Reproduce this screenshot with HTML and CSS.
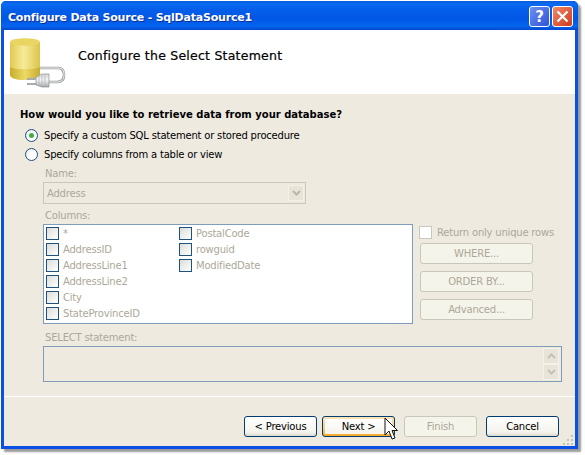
FILE: index.html
```html
<!DOCTYPE html>
<html lang="en">
<head>
  <meta charset="UTF-8" />
  <title>Configure Data Source</title>
  <link rel="stylesheet" href="styles.css">
</head>
<body>
  <div class="window">
    <div class="titlebar">
      <span class="title-text">Configure Data Source - SqlDataSource1</span>
      <div class="title-buttons">
        <span class="cap cap-help">?</span>
        <span class="cap cap-close">
          <svg width="13" height="13" viewBox="0 0 13 13"><path d="M1.5 1.5L11.5 11.5M11.5 1.5L1.5 11.5" stroke="#fff" stroke-width="2.2" fill="none"/></svg>
        </span>
      </div>
    </div>

    <div class="client">
      <!-- Cabecera blanca -->
      <div class="header">
        <svg class="db-icon" width="60" height="54" viewBox="0 0 60 54">
          <defs>
            <linearGradient id="dbBody" x1="0" y1="0" x2="1" y2="0">
              <stop offset="0" stop-color="#e0c94f"/>
              <stop offset="0.45" stop-color="#f7eb9a"/>
              <stop offset="1" stop-color="#dcc54c"/>
            </linearGradient>
            <linearGradient id="dbLow" x1="0" y1="0" x2="1" y2="0">
              <stop offset="0" stop-color="#c9ae2c"/>
              <stop offset="0.5" stop-color="#ecd967"/>
              <stop offset="1" stop-color="#c8ad2e"/>
            </linearGradient>
            <linearGradient id="plug" x1="0" y1="0" x2="0" y2="1">
              <stop offset="0" stop-color="#d5d7d9"/>
              <stop offset="0.45" stop-color="#f4f5f6"/>
              <stop offset="1" stop-color="#a5a7a9"/>
            </linearGradient>
          </defs>
          <path d="M0 4V37C0 40 7 42 15 42S30 40 30 37V4Z" fill="url(#dbBody)"/>
          <path d="M0 29C4 32 26 32 30 29V37C30 40 23 42 15 42S0 40 0 37Z" fill="url(#dbLow)"/>
          <ellipse cx="15" cy="4" rx="15" ry="3.8" fill="#e9d563"/>
          <path d="M30 30H48C53 30 54 33 54 37C54 42 51 44 47 44H39" fill="none" stroke="#9a9d9f" stroke-width="2.6"/>
          <path d="M30 30H48C53 30 54 33 54 37C54 42 51 44 47 44H39" fill="none" stroke="#f0f1f1" stroke-width="1"/>
          <path d="M26 39L32 36H39V49H32L26 47Z" fill="url(#plug)" stroke="#8a8c8e" stroke-width="0.7"/>
          <path d="M29 37V48M32 37V48M35 37V48" stroke="#b4b6b8" stroke-width="0.8"/>
          <path d="M17 40H26V42H17ZM17 45H26V47H17Z" fill="#a9abad"/>
        </svg>
        <div class="header-title">Configure the Select Statement</div>
      </div>

      <div class="body">
        <div class="question">How would you like to retrieve data from your database?</div>

        <label class="radio-row"><span class="radio radio-on"></span>Specify a custom SQL statement or stored procedure</label>
        <label class="radio-row"><span class="radio"></span>Specify columns from a table or view</label>

        <div class="columns-panel">
          <div class="label label-name">Name:</div>
          <div class="select">
            <span class="select-text">Address</span>
            <span class="select-arrow">
              <svg width="9" height="6" viewBox="0 0 9 6"><path d="M1 1L4.5 4.5L8 1" stroke="#b9b6aa" stroke-width="2" fill="none"/></svg>
            </span>
          </div>
          <div class="label label-columns">Columns:</div>

          <div class="columns-row">
            <div class="listbox">
              <div class="list-col list-col-a">
                <div class="item"><span class="check"></span>*</div>
                <div class="item"><span class="check"></span>AddressID</div>
                <div class="item"><span class="check"></span>AddressLine1</div>
                <div class="item"><span class="check"></span>AddressLine2</div>
                <div class="item"><span class="check"></span>City</div>
                <div class="item"><span class="check"></span>StateProvinceID</div>
              </div>
              <div class="list-col">
                <div class="item"><span class="check"></span>PostalCode</div>
                <div class="item"><span class="check"></span>rowguid</div>
                <div class="item"><span class="check"></span>ModifiedDate</div>
              </div>
            </div>
            <div class="side">
              <div class="unique"><span class="check check-plain"></span>Return only unique rows</div>
              <div class="side-btn">WHERE...</div>
              <div class="side-btn">ORDER BY...</div>
              <div class="side-btn">Advanced...</div>
            </div>
          </div>

          <div class="label label-select">SELECT statement:</div>
          <div class="statement">
            <div class="scroll">
              <span class="scroll-btn"><svg width="9" height="6" viewBox="0 0 9 6"><path d="M1 5L4.5 1.5L8 5" stroke="#c4c1b5" stroke-width="2" fill="none"/></svg></span>
              <span class="scroll-btn"><svg width="9" height="6" viewBox="0 0 9 6"><path d="M1 1L4.5 4.5L8 1" stroke="#c4c1b5" stroke-width="2" fill="none"/></svg></span>
            </div>
          </div>
        </div>
      </div>

      <!-- Botones del asistente -->
      <div class="footer">
        <div class="btn">&lt; Previous</div>
        <div class="btn btn-default"><span class="btn-inner">Next &gt;</span></div>
        <div class="btn btn-disabled">Finish</div>
        <div class="btn">Cancel</div>
      </div>

      <svg class="grip" width="11" height="11" viewBox="0 0 11 11">
        <path d="M8 1h2v2H8zM4 5h2v2H4zM8 5h2v2H8zM0 9h2v2H0zM4 9h2v2H4zM8 9h2v2H8z" fill="#c5c2b6"/>
      </svg>
      <svg class="cursor" width="14" height="24" viewBox="0 0 14 24">
        <path d="M1 1V18L5 14L8 22L11 21L8 13.5H13.5Z" fill="#fff" stroke="#111" stroke-width="1"/>
      </svg>
    </div>
  </div>
</body>
</html>
```

FILE: styles.css
```css
html, body {
  margin: 0;
  background: #fff;
}

body {
  font-family: "DejaVu Sans", sans-serif;
  font-size: 10px;
  letter-spacing: -0.2px;
  color: #000;
  width: 585px;
  height: 455px;
  overflow: hidden;
}

/* Ventana estilo XP */
.window {
  width: 577px;
  height: 448px;
  margin: 1px 0 0 1px;
  box-shadow: 3px 3px 2px #9a9a9a;
  background: #0a4fe6;
  border-radius: 5px 5px 0 0;
  display: flex;
  flex-direction: column;
}

.titlebar {
  height: 29px;
  flex: none;
  display: flex;
  align-items: center;
  justify-content: space-between;
  padding: 0 5px 0 7px;
  border-radius: 5px 5px 0 0;
  background: linear-gradient(to bottom, #0a5ad8 0, #0a6cf2 3px, #0560ea 7px, #0156e6 18px, #0466ee 25px, #0247d0 29px);
}

.title-text {
  color: #fff;
  font-weight: bold;
  font-size: 11px;
  letter-spacing: -0.2px;
  text-shadow: 1px 1px 0 #0a2f9c;
  margin-top: 4px;
}

.title-buttons {
  display: flex;
  gap: 2px;
  margin-top: 2px;
}

.cap {
  width: 19px;
  height: 19px;
  border: 1px solid #fff;
  border-radius: 3px;
  display: flex;
  align-items: center;
  justify-content: center;
  color: #fff;
  font-weight: bold;
  font-size: 15px;
}

.cap-help {
  background: linear-gradient(135deg, #6d8ff0, #2f55d8);
}

.cap-close {
  background: linear-gradient(135deg, #ef8a6c, #cf3a18);
}

.client {
  flex: 1;
  margin: 0 3px 3px;
  background: #eeeae0;
  display: flex;
  flex-direction: column;
  position: relative;
}

.header {
  height: 64px;
  flex: none;
  background: #fff;
  display: flex;
  align-items: flex-start;
}

.db-icon {
  margin: 8px 0 0 6px;
  flex: none;
}

.header-title {
  margin: 18px 0 0 8px;
  font-size: 12.5px;
  font-weight: 500;
  letter-spacing: 0.23px;
  -webkit-text-stroke: 0.2px #000;
}

.body {
  flex: 1;
  padding: 14px 0 0 16px;
  border-bottom: 1px solid #fff;
}

.question {
  font-weight: bold;
  font-size: 10px;
  letter-spacing: 0;
  line-height: 14px;
  margin-bottom: 4px;
}

.radio-row {
  display: flex;
  align-items: center;
  height: 19px;
  padding-left: 5px;
  color: #000;
}

.radio {
  width: 11px;
  height: 11px;
  border: 1px solid #1c5180;
  border-radius: 50%;
  background: radial-gradient(circle at 65% 65%, #fff 40%, #dcdcd4 100%);
  margin-right: 6px;
  flex: none;
  display: flex;
  align-items: center;
  justify-content: center;
}

.radio-on::after {
  content: "";
  width: 5px;
  height: 5px;
  border-radius: 50%;
  background: #3fae46;
}

.columns-panel {
  padding: 3px 0 0 23px;
  color: #aca899;
}

.label {
  line-height: 14px;
  padding-left: 2px;
}

.label-name {
  margin-bottom: 1px;
}

.select {
  width: 261px;
  height: 20px;
  border: 1px solid #c9c7ba;
  display: flex;
  align-items: center;
  justify-content: space-between;
}

.select-text {
  padding-left: 3px;
}

.select-arrow {
  width: 16px;
  height: 16px;
  margin-right: 1px;
  background: #e8e5d8;
  border: 1px solid #f4f2e8;
  box-sizing: border-box;
  display: flex;
  align-items: center;
  justify-content: center;
}

.label-columns {
  margin-top: 5px;
  margin-bottom: 1px;
}

.columns-row {
  display: flex;
  align-items: flex-start;
}

.listbox {
  width: 368px;
  height: 98px;
  border: 1px solid #7f9db9;
  background: #fff;
  display: flex;
}

.list-col {
  padding-left: 2px;
}

.list-col-a {
  width: 131px;
}

.item {
  display: flex;
  align-items: center;
  height: 16px;
}

.check {
  width: 11px;
  height: 11px;
  border: 1px solid #1c5180;
  background: linear-gradient(135deg, #dcdcd7, #fff);
  margin-right: 4px;
  flex: none;
}

.check-plain {
  border-color: #c9c7ba;
  background: #fff;
  margin-right: 5px;
}

.side {
  padding-left: 6px;
  width: 140px;
}

.unique {
  display: flex;
  align-items: center;
  height: 16px;
  margin-bottom: 3px;
  white-space: nowrap;
}

.side-btn {
  width: 111px;
  height: 19px;
  margin: 0 0 7px 1px;
  border: 1px solid #c9c7ba;
  border-radius: 3px;
  background: #f5f4ea;
  display: flex;
  align-items: center;
  justify-content: center;
}

.label-select {
  margin-top: 4px;
  margin-bottom: 1px;
}

.statement {
  width: 517px;
  height: 34px;
  border: 1px solid #7f9db9;
  display: flex;
  justify-content: flex-end;
}

.scroll {
  width: 16px;
  padding: 1px 2px 0 0;
  display: flex;
  flex-direction: column;
}

.scroll-btn {
  height: 16px;
  background: #e8e5d8;
  border: 1px solid #f4f2e8;
  box-sizing: border-box;
  display: flex;
  align-items: center;
  justify-content: center;
}

.footer {
  height: 49px;
  flex: none;
  display: flex;
  gap: 5px;
  padding: 19px 0 0 240px;
  box-sizing: border-box;
}

.btn {
  width: 71px;
  height: 19px;
  border: 1px solid #003c74;
  border-radius: 3px;
  background: linear-gradient(to bottom, #fff, #f4f3ec 80%, #dcd8cc);
  display: flex;
  align-items: center;
  justify-content: center;
}

.btn-default {
  background: linear-gradient(to bottom, #fde5b4, #fbcf80 60%, #f5a623);
}

.btn-inner {
  width: 67px;
  height: 15px;
  background: linear-gradient(to bottom, #fff, #f4f3ec);
  display: flex;
  align-items: center;
  justify-content: center;
}

.btn-disabled {
  margin-left: 4px;
  margin-right: 4px;
  border-color: #c9c7ba;
  background: #f5f4ea;
  color: #aca899;
}

.grip {
  position: absolute;
  right: 1px;
  bottom: 1px;
}

.cursor {
  position: absolute;
  left: 380px;
  top: 387px;
}
```
